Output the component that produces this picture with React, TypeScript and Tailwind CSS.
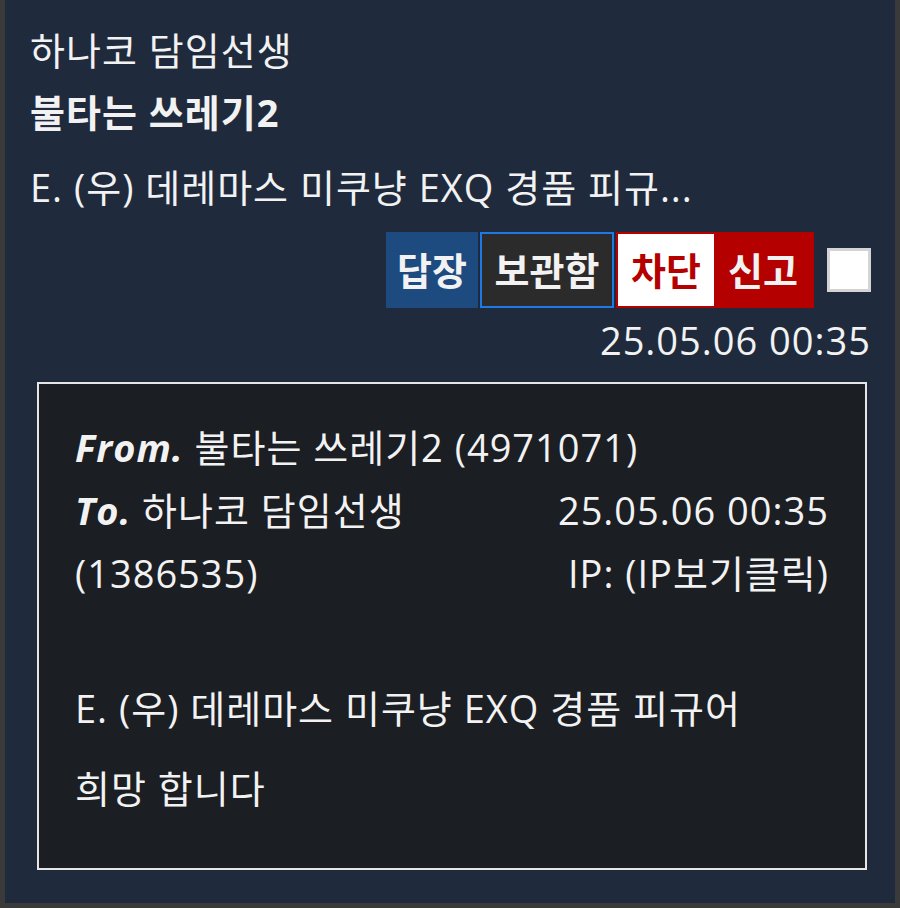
import type { FC } from "react";

const font = {
  fontFamily: '"Open Sans", "Noto Sans CJK KR", sans-serif',
};

const App: FC = () => {
  return (
    <div
      className="w-[900px] h-[908px] bg-[#3a3a3a] pl-[5px] pr-[5px] pb-[5px] overflow-hidden"
      style={font}
    >
      <div className="h-full bg-[#1f2b3d] text-[#f2f2f2] pl-[25px] pr-[24px] pt-[19px] text-[38px] tracking-[1px]">
        {/* 헤더 */}
        <div className="leading-[62px] whitespace-nowrap">하나코 담임선생</div>
        <div className="leading-[62px] font-bold whitespace-nowrap">불타는 쓰레기2</div>
        <div className="mt-[13px] leading-[62px] whitespace-nowrap">
          E. (우) 데레마스 미쿠냥 EXQ 경품 피규...
        </div>

        {/* 버튼 */}
        <div className="mt-[14px] flex items-center justify-end tracking-normal">
          <button
            type="button"
            className="h-[76px] w-[92px] bg-[#1d4a7f] text-[#f2f2f2] font-bold flex items-center justify-center"
          >
            답장
          </button>
          <button
            type="button"
            className="ml-[2px] h-[76px] w-[134px] bg-[#2b2b2b] border-2 border-[#1e78e6] text-[#f2f2f2] font-bold flex items-center justify-center"
          >
            보관함
          </button>
          <div className="ml-[2px] flex h-[76px] border-2 border-[#b50000]">
            <button
              type="button"
              className="w-[96px] h-full bg-white text-[#b50000] font-bold flex items-center justify-center"
            >
              차단
            </button>
            <button
              type="button"
              className="w-[98px] h-full bg-[#b50000] text-[#f2f2f2] font-bold flex items-center justify-center"
            >
              신고
            </button>
          </div>
          <span className="ml-[13px] w-[44px] h-[44px] bg-white border-[3px] border-[#d4d4d4] inline-block" />
        </div>

        <div className="mt-[14px] leading-[36px] text-right">25.05.06 00:35</div>

        {/* 쪽지 본문 */}
        <div className="mt-[24px] ml-[7px] mr-[4px] h-[488px] border-2 border-[#e6e6e6] bg-[#1b1e23] px-[36px] pt-[32px]">
          <div className="leading-[63px] whitespace-nowrap">
            <span className="font-bold italic">From.</span> 불타는 쓰레기2 (4971071)
          </div>
          <div className="flex justify-between leading-[63px]">
            <div>
              <div className="whitespace-nowrap">
                <span className="font-bold italic">To.</span> 하나코 담임선생
              </div>
              <div>(1386535)</div>
            </div>
            <div className="text-right">
              <div>25.05.06 00:35</div>
              <div className="whitespace-nowrap">IP: (IP보기클릭)</div>
            </div>
          </div>
          <div className="mt-[63px] leading-[80px] whitespace-nowrap">
            E. (우) 데레마스 미쿠냥 EXQ 경품 피규어
          </div>
          <div className="leading-[80px]">희망 합니다</div>
        </div>
      </div>
    </div>
  );
};

export default App;
